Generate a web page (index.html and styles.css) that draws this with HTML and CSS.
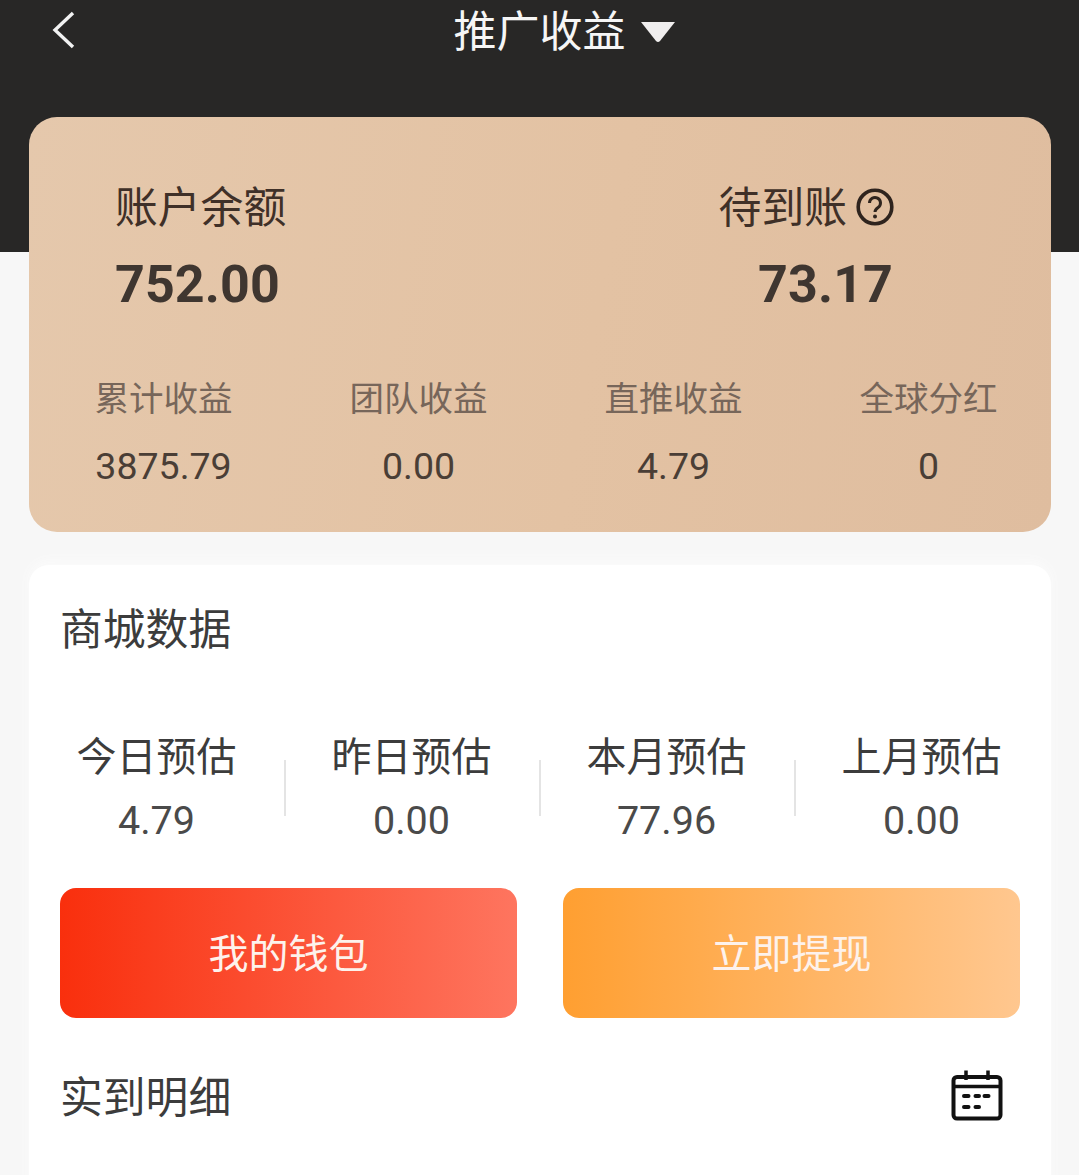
FILE: index.html
```html
<!DOCTYPE html>
<html lang="zh-CN">
<head>
<meta charset="utf-8">
<title>推广收益</title>
<link rel="stylesheet" href="styles.css">
</head>
<body>
<div class="page">
  <header class="topbar">
    <svg class="back" viewBox="0 0 24 38" width="24" height="38"><path d="M22 2 L4 19 L22 36" fill="none" stroke="#f2f2f2" stroke-width="3.4"/></svg>
    <div class="title"><span>推广收益</span><svg class="caret" viewBox="0 0 36 22" width="36" height="22"><path d="M1 1 H35 L20 20 Q18 22 16 20 Z" fill="#f0eeee"/></svg></div>
  </header>
  <section class="earn">
    <div class="earn-top">
      <div class="bal">
        <div class="bal-label">账户余额</div>
        <div class="bal-num">752.00</div>
      </div>
      <div class="pending">
        <div class="bal-label pending-label">待到账<svg class="help" viewBox="0 0 38 38" width="38" height="38"><circle cx="19" cy="19" r="16.8" fill="none" stroke="#2f241e" stroke-width="3.6"/><path d="M13.5 15a5.5 5.5 0 1 1 8.6 4.5c-2 1.4-3.1 2.3-3.1 4.5" fill="none" stroke="#2f241e" stroke-width="3"/><circle cx="19" cy="28.5" r="2" fill="#2f241e"/></svg></div>
        <div class="bal-num pending-num">73.17</div>
      </div>
    </div>
    <div class="stats">
      <div class="stat"><div class="stat-label">累计收益</div><div class="stat-num">3875.79</div></div>
      <div class="stat"><div class="stat-label">团队收益</div><div class="stat-num">0.00</div></div>
      <div class="stat"><div class="stat-label">直推收益</div><div class="stat-num">4.79</div></div>
      <div class="stat"><div class="stat-label">全球分红</div><div class="stat-num">0</div></div>
    </div>
  </section>
  <section class="panel">
    <h2 class="panel-title">商城数据</h2>
    <div class="data">
      <div class="cell"><div class="cell-label">今日预估</div><div class="cell-num">4.79</div></div>
      <div class="cell"><div class="cell-label">昨日预估</div><div class="cell-num">0.00</div></div>
      <div class="cell"><div class="cell-label">本月预估</div><div class="cell-num">77.96</div></div>
      <div class="cell"><div class="cell-label">上月预估</div><div class="cell-num">0.00</div></div>
    </div>
    <div class="actions">
      <a class="btn btn-red">我的钱包</a>
      <a class="btn btn-orange">立即提现</a>
    </div>
    <div class="detail">
      <h2 class="panel-title">实到明细</h2>
      <svg class="cal" viewBox="0 0 52 52" width="52" height="52">
        <rect x="2.5" y="8" width="47" height="41.5" rx="3.5" fill="none" stroke="#111" stroke-width="4"/>
        <path d="M2.5 17.5 H49.5" stroke="#111" stroke-width="3.5"/>
        <path d="M15 1.5 V11 M37 1.5 V11" stroke="#111" stroke-width="3.5"/>
        <path d="M13 27 H17.5 M24.5 27 H28 M33.5 27 H37.5 M13 38 H17.5 M24.5 38 H28" stroke="#111" stroke-width="4" stroke-linecap="round"/>
      </svg>
    </div>
  </section>
</div>
</body>
</html>
```
FILE: styles.css
```css
* { box-sizing: border-box; }
html, body { margin: 0; padding: 0; }
body {
  font-family: "Roboto", "Noto Sans CJK SC", sans-serif;
  background: #f7f7f7;
}
.page { width: 1079px; height: 1175px; overflow: hidden; }
.topbar {
  height: 252px;
  background: #282726;
  padding: 0 51px;
  display: grid;
  grid-template-columns: 24px 1fr 24px;
  align-items: start;
}
.back { margin-top: 11px; }
.title {
  display: flex;
  align-items: center;
  justify-content: center;
  gap: 14px;
  padding-left: 50px;
  padding-top: 1px;
  color: #f6f6f6;
  font-size: 43px;
  line-height: 62px;
}
.caret { margin-top: 0; }
.earn {
  width: 1022px;
  height: 415px;
  margin: -135px 0 0 29px;
  border-radius: 28px;
  position: relative;
  background: linear-gradient(100deg, #e5c8ac 0%, #e3c2a3 55%, #dfbd9f 100%);
  color: #3f3028;
}
.earn-top {
  display: flex;
  justify-content: space-between;
  padding: 59px 157px 0 86px;
}
.bal-label { font-size: 42.8px; line-height: 64px; }
.pending-label { display: flex; align-items: center; gap: 9px; }
.help { margin-bottom: 3px; }
.bal-num {
  font-size: 52px;
  font-weight: 700;
  line-height: 60px;
  margin-top: 15px;
  letter-spacing: 0.1px;
  color: #3f3630;
}
.pending { display: flex; flex-direction: column; align-items: flex-end; }
.pending-num { margin-right: 1px; }
.stats {
  display: grid;
  grid-template-columns: repeat(4, 255px);
  padding-left: 7px;
  margin-top: 59px;
}
.stat { text-align: center; }
.stat-label { font-size: 34.5px; line-height: 50px; color: #77665a; }
.stat-num { font-size: 37.5px; line-height: 44px; margin-top: 20px; color: #4a3e36; }
.panel {
  width: 1022px;
  height: 640px;
  margin: 33px 0 0 29px;
  background: #fff;
  border-radius: 20px 20px 0 0;
  box-shadow: 0 -4px 12px #fbfbfb;
  padding: 34px 31px 0;
  color: #3c3c3c;
}
.panel-title { margin: 0; font-size: 42.8px; font-weight: 400; line-height: 62px; }
.data {
  display: grid;
  grid-template-columns: repeat(4, 255px);
  margin: 67px -31px 0;
}
.cell { position: relative; text-align: center; }
.cell + .cell::before {
  content: "";
  position: absolute;
  left: 0;
  top: 32px;
  width: 2px;
  height: 56px;
  background: #e4e4e4;
}
.cell-label { font-size: 40px; line-height: 60px; }
.cell-num { font-size: 39.5px; line-height: 48px; margin-top: 9px; color: #4a4a4a; }
.actions {
  display: grid;
  grid-template-columns: 457px 457px;
  gap: 46px;
  margin-top: 43px;
}
.btn {
  height: 130px;
  border-radius: 16px;
  display: flex;
  align-items: center;
  justify-content: center;
  padding-bottom: 4px;
  font-size: 40px;
  color: #fdf2ec;
}
.btn-red { background: linear-gradient(90deg, #f92f0d 0%, #fe755f 100%); }
.btn-orange { background: linear-gradient(90deg, #ff9f31 0%, #ffc78f 100%); }
.detail {
  display: flex;
  justify-content: space-between;
  align-items: center;
  margin-top: 49px;
  padding-right: 17px;
}
.cal { margin-bottom: 6px; }
```
